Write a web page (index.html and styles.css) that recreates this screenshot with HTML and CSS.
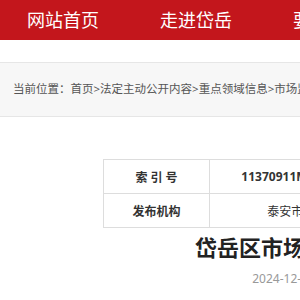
FILE: index.html
```html
<!DOCTYPE html>
<html lang="zh-CN">
<head>
    <meta charset="UTF-8">
    <meta name="viewport" content="width=device-width, initial-scale=1.0">
    <title>岱岳区市场监督管理局</title>
    <link rel="stylesheet" href="styles.css">
</head>
<body>
    <div class="header">
        <ul class="nav">
            <li><a href="#">网站首页</a></li>
            <li><a href="#">走进岱岳</a></li>
            <li><a href="#">要闻动态</a></li>
            <li><a href="#">政务公开</a></li>
        </ul>
    </div>

    <div class="crumbs">
        当前位置：<a href="#">首页</a>&gt;<a href="#">法定主动公开内容</a>&gt;<a href="#">重点领域信息</a>&gt;<a href="#">市场监管</a>
    </div>

    <div class="article">
        <table class="meta">
            <tr>
                <th>索 引 号</th>
                <td>11370911MB28577036X/2024-00123</td>
                <th>组配分类</th>
                <td>双随机一公开</td>
            </tr>
            <tr>
                <th>发布机构</th>
                <td class="plain">泰安市岱岳区市场监督管理局</td>
                <th>发文日期</th>
                <td class="plain">2024-12-06</td>
            </tr>
        </table>

        <h1 class="title">岱岳区市场监督管理局关于食品安全抽检不合格信息的公示</h1>
        <div class="info">
            <span>2024-12-06</span>
            <span>来源：岱岳区市场监督管理局</span>
            <span>浏览次数：168</span>
        </div>
    </div>
</body>
</html>
```

FILE: styles.css
```css
* {
    margin: 0;
    padding: 0;
    box-sizing: border-box;
}

html, body {
    overflow: hidden;
}

body {
    font-family: "Noto Sans", "Noto Sans CJK SC", sans-serif;
    background: #ffffff;
    color: #333333;
    width: 1200px;
}

a {
    color: inherit;
    text-decoration: none;
}

/* Header */
.header {
    height: 40px;
    background: #c3161c;
}

.nav {
    list-style: none;
    display: flex;
    gap: 61px;
    padding-left: 27px;
}

.nav li {
    line-height: 40px;
    font-size: 18px;
    color: #ffffff;
    white-space: nowrap;
}

/* Breadcrumb */
.crumbs {
    margin-top: 22px;
    height: 55px;
    line-height: 52px;
    padding-left: 13px;
    background: #f7f7f7;
    border-top: 1px solid #e6e6e6;
    border-bottom: 1px solid #e6e6e6;
    font-size: 11.5px;
    color: #555555;
    white-space: nowrap;
}

/* Article */
.article {
    width: 756px;
    margin-left: 103px;
    padding-top: 42px;
}

.meta {
    width: 100%;
    border-collapse: collapse;
    table-layout: fixed;
}

.meta th,
.meta td {
    height: 34px;
    border: 1px solid #dddddd;
    text-align: center;
    font-size: 12px;
    font-weight: 700;
    color: #333333;
    white-space: nowrap;
}

.meta th {
    width: 106px;
}

.meta td.plain {
    font-weight: 400;
}

.title {
    margin-top: 4px;
    line-height: 30px;
    font-size: 22px;
    font-weight: 700;
    color: #222222;
    text-align: center;
    white-space: nowrap;
}

.info {
    margin-top: 7px;
    line-height: 20px;
    font-size: 12px;
    color: #999999;
    text-align: center;
    white-space: nowrap;
}

.info span {
    margin: 0 38px;
}
```
